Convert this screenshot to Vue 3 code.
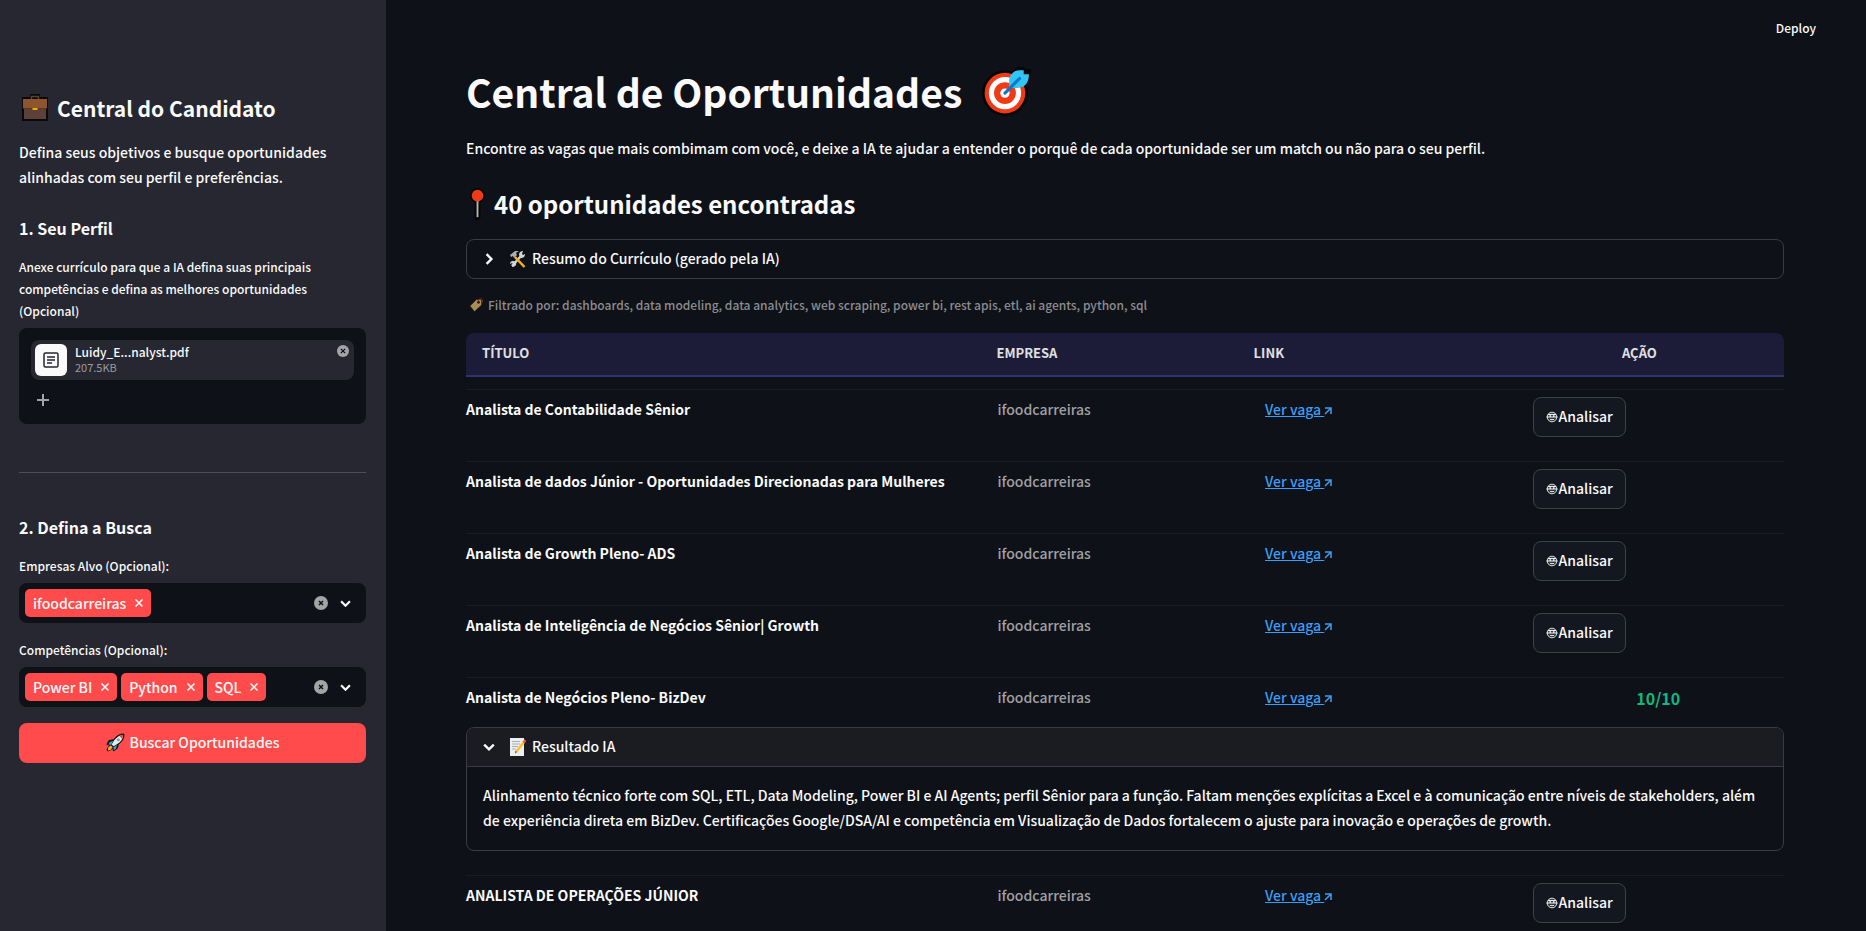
<template>
  <div class="app">
    <aside class="sidebar">
      <h2>
        <svg class="icon-case" viewBox="0 0 28 28" aria-hidden="true">
          <path d="M1 3h8V0h10v3h8v24H1z" fill="#0b0909" />
          <path d="M10.500 5V2.500h7V5" fill="none" stroke="#5d4037" stroke-width="1.500" />
          <path d="M2 5h24v9.500H2z" fill="#8e562e" />
          <path d="M3 14.500h22V25H3z" fill="#5d4037" />
          <path d="M11.500 14h5v2h-5z" fill="#f9a800" />
        </svg>
        Central do Candidato
      </h2>
      <p class="intro">Defina seus objetivos e busque oportunidades alinhadas com seu perfil e preferências.</p>

      <h3>1. Seu Perfil</h3>
      <label class="field-label" for="curriculo">Anexe currículo para que a IA defina suas principais competências e defina as melhores oportunidades (Opcional)</label>
      <div class="uploader">
        <input id="curriculo" class="hidden-input" type="file" ref="fileInput" />
        <div class="file">
          <span class="file-icon">
            <svg viewBox="0 0 16 16" aria-hidden="true">
              <rect x="1" y="1" width="14" height="14" rx="1.500" />
              <path d="M4 5h8M4 8h8M4 11h5" />
            </svg>
          </span>
          <div class="file-info">
            <span class="file-name">Luidy_E...nalyst.pdf</span>
            <span class="file-size">207.5KB</span>
          </div>
          <button type="button" class="clear small" aria-label="Remover arquivo">
            <svg viewBox="0 0 14 14"><circle cx="7" cy="7" r="7" /><path d="M4.500 4.500l5 5M9.500 4.500l-5 5" /></svg>
          </button>
        </div>
        <button type="button" class="add" aria-label="Adicionar arquivo" @click="fileInput.click()">
          <svg viewBox="0 0 12 12"><path d="M6 0v12M0 6h12" /></svg>
        </button>
      </div>

      <hr />

      <h3>2. Defina a Busca</h3>
      <div v-for="field in fields" :key="field.id" class="field">
        <label class="field-label" :for="field.id">{{ field.label }}</label>
        <div class="multiselect">
          <span v-for="tag in field.tags" :key="tag" class="tag">
            {{ tag }}
            <button type="button" :aria-label="'Remover ' + tag" @click="removeTag(field, tag)">
              <svg viewBox="0 0 8 8"><path d="M.5.5l7 7M7.500.5l-7 7" /></svg>
            </button>
          </span>
          <input :id="field.id" type="text" role="combobox" aria-expanded="false" />
          <button type="button" class="clear" aria-label="Limpar" @click="field.tags = []">
            <svg viewBox="0 0 14 14"><circle cx="7" cy="7" r="7" /><path d="M5 5l4 4M9 5l-4 4" /></svg>
          </button>
          <button type="button" class="toggle" aria-label="Abrir opções">
            <svg viewBox="0 0 10 6"><path d="M1 1l4 4 4-4" /></svg>
          </button>
        </div>
      </div>
      <button type="button" class="search">
        <svg viewBox="0 0 20 20" aria-hidden="true">
          <path d="M19 1c-5 0-8 2-11 6L3 8l-2 4 3 1-3 4 1 2 4-2 1-1 1 3 4-3 1-4c4-3 6-6 6-11z" fill="#151515" stroke="#151515" />
          <path d="M18 2c-4.500.3-7 2.500-9.500 6L6 12l2 2 4-2.500C15.500 9 17.700 6.500 18 2z" fill="#e4ebee" />
          <path d="M18 2l-4 1 3 3z" fill="#e53935" />
          <path d="M7.500 8.500l-3.500 1-1.500 2.500 3 .3zM11.500 12.500l-1 4-2.300 1.500-.4-3z" fill="#29a9e0" />
          <path d="M5 13l2 2-2 2.500-3 .8.500-3z" fill="#f9a825" />
          <circle cx="13" cy="7" r="1.600" fill="#8b9ca5" />
        </svg>
        Buscar Oportunidades
      </button>
    </aside>

    <div class="main">
      <header class="topbar">
        <button type="button">Deploy</button>
      </header>
      <main class="content">
        <h1>
          Central de Oportunidades
          <svg class="icon-target" viewBox="0 0 48 48" aria-hidden="true">
            <circle cx="23" cy="26" r="22" fill="#050505" />
            <path d="M26 17V10l9-9h6l2 2h5l1 7-10 11h-9z" fill="#050505" />
            <circle cx="23" cy="26" r="19.500" fill="#f03a17" />
            <circle cx="23" cy="26" r="13" fill="none" stroke="#fff" stroke-width="5" />
            <circle cx="23" cy="26" r="4.500" fill="#fff" />
            <path d="M27 21v-8c1-5 5-9 10-9h4v4h5c0 7-3 13-11 13z" fill="#30c5f4" />
            <path d="M23 26L37 12" stroke="#0878d1" stroke-width="3" stroke-linecap="round" />
          </svg>
        </h1>
        <p class="lead">Encontre as vagas que mais combimam com você, e deixe a IA te ajudar a entender o porquê de cada oportunidade ser um match ou não para o seu perfil.</p>

        <h2>
          <svg class="icon-pin" viewBox="0 0 16 34" aria-hidden="true">
            <circle cx="8" cy="8" r="8" fill="#050505" />
            <path d="M8 12v19" stroke="#050505" stroke-width="6" stroke-linecap="round" />
            <path d="M8 13v18" stroke="#b5b5b5" stroke-width="2" />
            <circle cx="8" cy="8" r="6.200" fill="#f03a17" />
          </svg>
          40 oportunidades encontradas
        </h2>

        <details class="expander">
          <summary>
            <svg class="chevron" viewBox="0 0 10 10"><path d="M3 1l4 4-4 4" /></svg>
            <svg class="icon-text" viewBox="0 0 16 18" aria-hidden="true">
              <path d="M2 16l9-10" stroke="#d2d5d7" stroke-width="2.500" />
              <path d="M9 5c0-3 2-4 4-4l-1 3 1 1 2-1c0 3-2 4-4 4zM6 12c1 3-1 5-4 5l1-3-1-1-2 1c0-3 3-4 6-2z" fill="#d2d5d7" />
              <path d="M5 7l9.500 10" stroke="#fbb017" stroke-width="2.500" />
              <path d="M0 5l5-4 4 0-3 2 1 2-3 3-1-2-2 1z" fill="#a9adb0" />
            </svg>
            Resumo do Currículo (gerado pela IA)
          </summary>
        </details>

        <p class="caption">
          <svg class="icon-tag" viewBox="0 0 16 16" aria-hidden="true">
            <path d="M2 9L8.500 2.500h5V8l-7 6.500z" fill="#a88d57" stroke="#1c1510" stroke-width=".5" />
            <circle cx="10.500" cy="5.300" r="1.400" fill="#2b1412" />
            <path d="M10 4c1-3 4-3 4.500-1s-.5 3-1.500 4" fill="none" stroke="#7b291d" />
          </svg>
          Filtrado por: dashboards, data modeling, data analytics, web scraping, power bi, rest apis, etl, ai agents, python, sql
        </p>

        <table>
          <thead>
            <tr>
              <th>TÍTULO</th>
              <th>EMPRESA</th>
              <th>LINK</th>
              <th class="center">AÇÃO</th>
            </tr>
          </thead>
          <tbody>
            <template v-for="job in jobs" :key="job.title">
              <tr class="job" :class="{ analyzed: job.score }">
                <td class="title">{{ job.title }}</td>
                <td class="company">{{ job.company }}</td>
                <td>
                  <a href="#">Ver vaga
                    <svg viewBox="0 0 8 8" aria-hidden="true"><path d="M1 1h6v6M7 1L1 7" /></svg></a>
                </td>
                <td v-if="job.score" class="score">{{ job.score }}</td>
                <td v-else>
                  <button type="button" class="analyze">
                    <svg viewBox="0 0 12 12" aria-hidden="true">
                      <circle cx="6" cy="6" r="4.800" fill="#33363c" stroke="#e4e5e7" />
                      <path d="M2 3.500h8M.5 6h11" stroke="#f2f2f2" stroke-width="1.200" />
                      <path d="M3.500 5h1.500M7 5h1.500" stroke="#fff" stroke-width="1.500" />
                      <path d="M4 8.500h4" stroke="#ddd" />
                    </svg>Analisar
                  </button>
                </td>
              </tr>
              <tr v-if="job.result" class="result">
                <td colspan="4">
                  <details class="expander" open>
                    <summary>
                      <svg class="chevron" viewBox="0 0 10 10"><path d="M1 3l4 4 4-4" /></svg>
                      <svg class="icon-text" viewBox="0 0 16 18" aria-hidden="true">
                        <path d="M0 0h14v18H0z" fill="#eceff0" />
                        <path d="M2 3.500h8M2 6h8M2 8.500h6M2 11h4" stroke="#a9afb2" />
                        <path d="M6 14L14 4" stroke="#fbc02d" stroke-width="2.500" />
                        <path d="M13.500 4.600L15.500 2" stroke="#ef5350" stroke-width="2.500" />
                        <path d="M5 15.500l.5-2.500 1.500 1z" fill="#444" />
                      </svg>
                      Resultado IA
                    </summary>
                    <p>{{ job.result }}</p>
                  </details>
                </td>
              </tr>
            </template>
          </tbody>
        </table>
      </main>
    </div>
  </div>
</template>

<script setup>
import { ref } from 'vue'

const fileInput = ref(null)

const fields = ref([
  { id: 'empresas', label: 'Empresas Alvo (Opcional):', tags: ['ifoodcarreiras'] },
  { id: 'competencias', label: 'Competências (Opcional):', tags: ['Power BI', 'Python', 'SQL'] }
])

const jobs = ref([
  { title: 'Analista de Contabilidade Sênior', company: 'ifoodcarreiras' },
  { title: 'Analista de dados Júnior - Oportunidades Direcionadas para Mulheres', company: 'ifoodcarreiras' },
  { title: 'Analista de Growth Pleno- ADS', company: 'ifoodcarreiras' },
  { title: 'Analista de Inteligência de Negócios Sênior| Growth', company: 'ifoodcarreiras' },
  {
    title: 'Analista de Negócios Pleno- BizDev',
    company: 'ifoodcarreiras',
    score: '10/10',
    result: 'Alinhamento técnico forte com SQL, ETL, Data Modeling, Power BI e AI Agents; perfil Sênior para a função. Faltam menções explícitas a Excel e à comunicação entre níveis de stakeholders, além de experiência direta em BizDev. Certificações Google/DSA/AI e competência em Visualização de Dados fortalecem o ajuste para inovação e operações de growth.'
  },
  { title: 'ANALISTA DE OPERAÇÕES JÚNIOR', company: 'ifoodcarreiras' }
])

function removeTag(field, tag) {
  field.tags = field.tags.filter(t => t !== tag)
}
</script>

<style>
body {
  background: #0e1117;
}
</style>

<style scoped>
* {
  box-sizing: border-box;
}

.app {
  display: flex;
  height: 100vh;
  overflow: hidden;
  background: #0e1117;
  color: #fafafa;
  font-family: "Noto Sans CJK SC", "Noto Sans", sans-serif;
  font-size: 14px;
  font-weight: 500;
  line-height: 25px;
}

h1,
h2,
h3,
p {
  margin: 0;
}

button {
  padding: 0;
  border: none;
  background: none;
  color: inherit;
  font: inherit;
  cursor: pointer;
}

svg {
  flex: none;
  fill: none;
}

/* sidebar */
.sidebar {
  flex: 0 0 386px;
  padding: 92px 20px 24px 19px;
  background: #262730;
  overflow: hidden;
}

.sidebar h2 {
  display: flex;
  align-items: center;
  gap: 8px;
  margin-bottom: 16px;
  padding-left: 2px;
  font-size: 21px;
  font-weight: 600;
  line-height: 32px;
}

.icon-case {
  width: 28px;
  height: 28px;
}

h3 {
  margin-bottom: 15px;
  font-size: 16px;
  font-weight: 600;
  line-height: 25px;
}

.intro {
  margin-bottom: 26px;
}

.field-label {
  display: block;
  margin-bottom: 6px;
  font-size: 12px;
  line-height: 22px;
}

.uploader {
  height: 96px;
  padding: 12px;
  border-radius: 8px;
  background: #0e1117;
}

.hidden-input {
  display: none;
}

.file {
  display: flex;
  align-items: flex-start;
  gap: 8px;
  padding: 4px;
  border-radius: 8px;
  background: #262730;
}

.file-icon {
  display: flex;
  align-items: center;
  justify-content: center;
  width: 32px;
  height: 32px;
  border-radius: 6px;
  background: #fafafa;
}

.file-icon svg {
  width: 16px;
  height: 16px;
  stroke: #262730;
  stroke-width: 1.5;
}

.file-info {
  display: flex;
  flex: 1;
  flex-direction: column;
}

.file-name {
  font-size: 12px;
  line-height: 16px;
}

.file-size {
  color: #9b9ca0;
  font-size: 11px;
  font-weight: 400;
  line-height: 14px;
}

.clear {
  display: flex;
  width: 14px;
  height: 14px;
}

.clear.small {
  width: 12px;
  height: 12px;
  margin: 1px;
}

.clear svg {
  width: 100%;
  height: 100%;
  fill: #a3a4a8;
  stroke: #0e1117;
  stroke-width: 1.5;
}

.clear circle {
  stroke: none;
}

.add {
  display: flex;
  margin: 14px 0 0 6px;
}

.add svg {
  width: 12px;
  height: 12px;
  stroke: #a3a4a8;
  stroke-width: 2;
}

hr {
  margin: 48px 0 42px;
  border: none;
  border-top: 1px solid #4c4d55;
}

.field {
  margin-bottom: 16px;
}

.multiselect {
  display: flex;
  align-items: center;
  height: 40px;
  padding: 0 15px 0 6px;
  border-radius: 8px;
  background: #0e1117;
}

.tag {
  display: flex;
  align-items: center;
  gap: 9px;
  height: 28px;
  margin-right: 4px;
  padding: 0 8px;
  border-radius: 5px;
  background: #ff4b4b;
  white-space: nowrap;
}

.tag button {
  display: flex;
}

.tag svg {
  width: 8px;
  height: 8px;
  stroke: #fff;
  stroke-width: 1.5;
}

.multiselect input {
  flex: 1;
  width: 0;
  min-width: 0;
  padding: 0;
  border: none;
  outline: none;
  background: transparent;
  color: #fafafa;
  font: inherit;
}

.toggle {
  display: flex;
  margin-left: 12px;
}

.toggle svg {
  width: 11px;
  height: 7px;
  stroke: #fafafa;
  stroke-width: 2;
}

.search {
  display: flex;
  align-items: center;
  justify-content: center;
  gap: 5px;
  width: 100%;
  height: 40px;
  padding-bottom: 1px;
  border-radius: 8px;
  background: #ff4b4b;
}

.search svg {
  width: 19px;
  height: 19px;
}

/* main area */
.main {
  flex: 1;
  min-width: 0;
  overflow: hidden;
}

.topbar {
  display: flex;
  justify-content: flex-end;
  height: 67px;
  padding: 17px 50px 0 0;
}

.topbar button {
  height: 22px;
  font-size: 12px;
  line-height: 22px;
}

.content {
  padding: 0 82px 0 80px;
}

h1 {
  display: flex;
  align-items: center;
  gap: 19px;
  height: 48px;
  margin-bottom: 21px;
  font-size: 39px;
  font-weight: 700;
  line-height: 48px;
}

.icon-target {
  width: 50px;
  height: 50px;
}

.lead {
  margin-bottom: 27px;
}

.content h2 {
  display: flex;
  align-items: center;
  gap: 9px;
  margin-bottom: 19px;
  padding-left: 4px;
  font-size: 24px;
  font-weight: 600;
  line-height: 32px;
}

.icon-pin {
  width: 15px;
  height: 32px;
}

.expander {
  border: 1px solid #3a3c42;
  border-radius: 8px;
  overflow: hidden;
}

.expander summary {
  display: flex;
  align-items: center;
  height: 38px;
  padding: 0 16px 1px;
  list-style: none;
  cursor: pointer;
}

.expander[open] summary {
  height: 39px;
  border-bottom: 1px solid #3a3c42;
  background: #1a1c22;
}

.chevron {
  width: 12px;
  height: 12px;
  margin-right: 15px;
  stroke: #fafafa;
  stroke-width: 2;
}

.icon-text {
  width: 16px;
  height: 18px;
  margin-right: 6px;
}

.expander p {
  padding: 16px 16px 17px;
}

.caption {
  display: flex;
  align-items: center;
  gap: 4px;
  margin: 15px 0 17px;
  padding-left: 2px;
  color: #8b8c90;
  font-size: 12px;
  line-height: 22px;
}

.icon-tag {
  width: 16px;
  height: 16px;
}

table,
thead,
tbody {
  display: block;
}

thead {
  margin-bottom: 12px;
}

thead tr {
  display: grid;
  grid-template-columns: 2fr 1fr 1fr 1fr;
  height: 44px;
  padding: 0 16px;
  border-bottom: 2px solid #32326e;
  border-radius: 8px 8px 0 0;
  background: #1c1c38;
}

th {
  padding: 0;
  color: #e0e0e0;
  font-size: 13px;
  font-weight: 700;
  line-height: 40px;
  text-align: left;
}

th.center {
  text-align: center;
}

td {
  padding: 0;
}

.job {
  display: grid;
  grid-template-columns: 41fr 20fr 20fr 20fr;
  gap: 16px;
  height: 72px;
  padding-top: 7px;
  border-top: 1px solid #191b26;
}

.job.analyzed {
  height: 50px;
}

.title {
  font-weight: 600;
}

.company {
  color: #a0a0a4;
}

a {
  color: #3d9df3;
  text-decoration: underline;
}

a svg {
  width: 8px;
  height: 8px;
  stroke: #3d9df3;
  stroke-width: 1.5;
}

.score {
  color: #10b981;
  font-size: 16px;
  font-weight: 700;
  line-height: 27px;
  text-align: center;
}

.analyze {
  display: flex;
  align-items: center;
  justify-content: center;
  gap: 1px;
  height: 40px;
  padding: 0 12px 1px;
  border: 1px solid #3f4148;
  border-radius: 8px;
  background: #131720;
}

.analyze svg {
  width: 12px;
  height: 12px;
}

.result {
  display: block;
  padding-bottom: 24px;
}

.result td {
  display: block;
}
</style>
